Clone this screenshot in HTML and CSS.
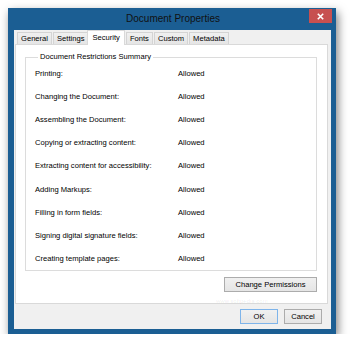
FILE: index.html
```html
<!DOCTYPE html>
<html lang="en">
<head>
    <meta charset="UTF-8">
    <title>Document Properties</title>
    <link rel="stylesheet" href="styles.css">
</head>
<body>
<div class="window">
    <div class="titlebar">
        <span class="title">Document Properties</span>
        <span class="close">
            <svg width="7" height="7" viewBox="0 0 7 7"><path d="M0.8 0.8 L6.2 6.2 M6.2 0.8 L0.8 6.2" stroke="#fff" stroke-width="1.6"/></svg>
        </span>
    </div>
    <div class="client">
        <div class="tabs">
            <span class="tab">General</span>
            <span class="tab">Settings</span>
            <span class="tab active">Security</span>
            <span class="tab">Fonts</span>
            <span class="tab">Custom</span>
            <span class="tab">Metadata</span>
        </div>
        <div class="panel">
            <fieldset class="group">
                <legend>Document Restrictions Summary</legend>
                <div class="row"><span>Printing:</span><span>Allowed</span></div>
                <div class="row"><span>Changing the Document:</span><span>Allowed</span></div>
                <div class="row"><span>Assembling the Document:</span><span>Allowed</span></div>
                <div class="row"><span>Copying or extracting content:</span><span>Allowed</span></div>
                <div class="row"><span>Extracting content for accessibility:</span><span>Allowed</span></div>
                <div class="row"><span>Adding Markups:</span><span>Allowed</span></div>
                <div class="row"><span>Filling in form fields:</span><span>Allowed</span></div>
                <div class="row"><span>Signing digital signature fields:</span><span>Allowed</span></div>
                <div class="row"><span>Creating template pages:</span><span>Allowed</span></div>
            </fieldset>
            <div class="panel-actions">
                <button class="btn wide">Change Permissions</button>
            </div>
        </div>
        <div class="footer">
            <button class="btn default">OK</button>
            <button class="btn">Cancel</button>
        </div>
        <span class="watermark">www.softpedia.com</span>
    </div>
</div>
</body>
</html>
```

FILE: styles.css
```css
body {
    margin: 0;
    background: #fff;
    font-family: "Liberation Sans", Arial, sans-serif;
}

.window {
    width: 328px;
    height: 326px;
    margin: 8px 0 0 8px;
    box-sizing: border-box;
    padding: 0 5px 5px 6px;
    background: #1b5e93;
    box-shadow: 2px 4px 9px rgba(0, 0, 0, 0.5);
    display: flex;
    flex-direction: column;
}

.titlebar {
    height: 22px;
    display: grid;
    grid-template-columns: 1fr auto 1fr;
    margin-right: -1px;
}

.title {
    grid-column: 2;
    font-size: 10px;
    line-height: 22px;
    color: #111;
}

.close {
    grid-column: 3;
    justify-self: end;
    width: 23px;
    height: 14px;
    margin-top: 1px;
    background: #c75050;
    display: flex;
    align-items: center;
    justify-content: center;
}

.close svg {
    display: block;
}

.client {
    flex: 1;
    background: #f0f0f0;
    display: flex;
    flex-direction: column;
    position: relative;
    font-size: 7.6px;
    color: #000;
}

.tabs {
    height: 14px;
    padding-left: 3px;
    display: flex;
    align-items: flex-end;
    position: relative;
    z-index: 1;
}

.tab {
    height: 11px;
    line-height: 11px;
    padding: 0 3px;
    margin-right: 1px;
    border: 1px solid #d4d4d4;
    border-bottom: none;
    background: linear-gradient(#f0f0f0, #e5e5e5);
}

.tab.active {
    height: 14px;
    line-height: 13px;
    margin: 0 -1px -1px -2px;
    padding: 0 4px;
    background: #fff;
    border-color: #d9d9d9;
}

.tab.active + .tab {
    margin-left: 2px;
}

.panel {
    flex: 1;
    margin: 0 3px 0 1px;
    background: #fff;
    border: 1px solid #d9d9d9;
    display: flex;
    flex-direction: column;
}

.group {
    margin: 7px 10px 0 9px;
    padding: 0 0 0 9px;
    border: 1px solid #dcdcdc;
    min-width: 0;
}

.group legend {
    padding: 0 2px;
    margin-left: 3px;
    line-height: 10px;
}

.row {
    height: 23.1px;
    display: grid;
    grid-template-columns: 143px 1fr;
    align-items: center;
}

.panel-actions {
    display: flex;
    justify-content: flex-end;
    margin: 6px 10px 0 0;
}

.btn {
    height: 15px;
    padding: 0;
    font-family: "Liberation Sans", Arial, sans-serif;
    font-size: 7.6px;
    color: #000;
    border: 1px solid #acacac;
    background: linear-gradient(#f0f0f0, #e5e5e5);
}

.btn.wide {
    width: 93px;
}

.footer {
    height: 25px;
    box-sizing: border-box;
    padding: 5px 9px 0 0;
    display: flex;
    justify-content: flex-end;
    align-items: flex-start;
    gap: 6px;
}

.footer .btn {
    width: 38px;
}

.btn.default {
    border-color: #7eb4ea;
}

.watermark {
    position: absolute;
    left: 202px;
    top: 268px;
    font-size: 6px;
    color: rgba(0, 0, 0, 0.09);
    pointer-events: none;
}
```
